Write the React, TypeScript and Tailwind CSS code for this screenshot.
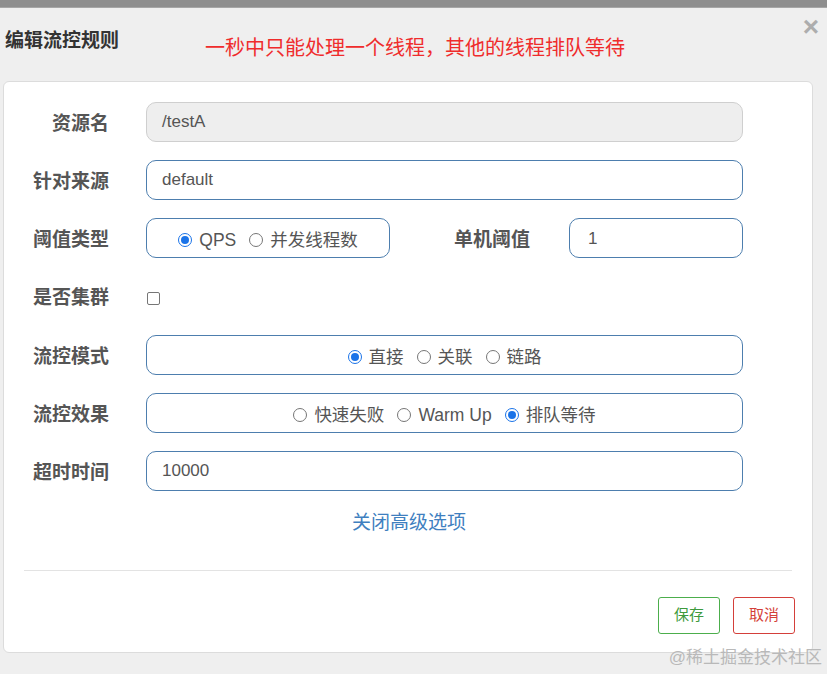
const font = "font-['Microsoft_YaHei','Liberation_Sans','Noto_Sans_CJK_SC',sans-serif]";

function Radio({ checked, label }: { checked?: boolean; label: string }) {
  return (
    <span className="flex items-center gap-[7px]">
      {checked ? (
        <span className="flex h-[14px] w-[14px] items-center justify-center rounded-full border-[1.5px] border-[#1a73e8] bg-white">
          <span className="h-[8px] w-[8px] rounded-full bg-[#1a73e8]" />
        </span>
      ) : (
        <span className="h-[14px] w-[14px] rounded-full border border-[#767676] bg-white" />
      )}
      <span className="text-[17.5px]">{label}</span>
    </span>
  );
}

function Label({ children }: { children: string }) {
  return (
    <div className="mt-[4px] w-[105px] shrink-0 text-right text-[19px] font-bold text-[#555]">{children}</div>
  );
}

const box = "h-[40px] rounded-[10px] border border-[#4d7eae] bg-white text-[17px] text-[#555]";

export default function App() {
  return (
    <div className={`relative h-[674px] w-[827px] overflow-hidden bg-[#efefef] ${font}`}>
      <div className="h-[8px] border-b border-[#a6a6a6] bg-[#8e8e8e]" />

      <div className="relative flex h-[73px] items-center">
        <h4 className="ml-[5px] mt-[-7px] text-[19px] font-bold text-[#333]">编辑流控规则</h4>
        <span className="ml-[86px] mt-[7px] text-[20px] text-[#ef2c2c]">一秒中只能处理一个线程，其他的线程排队等待</span>
        <span className="absolute right-[8px] top-[5px] text-[28px] font-bold leading-none text-[#adadad]">×</span>
      </div>

      <div className="ml-[3px] w-[810px] rounded-[6px] border border-[#dcdcdc] bg-white pt-[20px]">
        <div className="flex flex-col gap-[18.2px]">
          <div className="flex items-center">
            <Label>资源名</Label>
            <div className="ml-[37px] flex h-[40px] w-[597px] items-center rounded-[10px] border border-[#cfcfcf] bg-[#eeeeee] px-[15px] text-[17px] text-[#555]">
              /testA
            </div>
          </div>

          <div className="flex items-center">
            <Label>针对来源</Label>
            <div className={`ml-[37px] flex w-[597px] items-center px-[15px] ${box}`}>default</div>
          </div>

          <div className="flex items-center">
            <Label>阈值类型</Label>
            <div className={`ml-[37px] flex w-[244px] items-center justify-center gap-[13px] pt-[4px] ${box}`}>
              <Radio checked label="QPS" />
              <Radio label="并发线程数" />
            </div>
            <div className="ml-[64px] mt-[4px] w-[80px] text-[19px] font-bold text-[#555]">单机阈值</div>
            <div className={`ml-[35px] flex w-[174px] items-center px-[18px] ${box}`}>1</div>
          </div>

          <div className="flex h-[40px] items-center">
            <Label>是否集群</Label>
            <span className="ml-[38px] mt-[4px] h-[13px] w-[13px] rounded-[2px] border border-[#767676] bg-white" />
          </div>

          <div className="flex items-center">
            <Label>流控模式</Label>
            <div className={`ml-[37px] flex w-[597px] items-center justify-center gap-[13px] pt-[5px] ${box}`}>
              <Radio checked label="直接" />
              <Radio label="关联" />
              <Radio label="链路" />
            </div>
          </div>

          <div className="flex items-center">
            <Label>流控效果</Label>
            <div className={`ml-[37px] flex w-[597px] items-center justify-center gap-[13px] pt-[5px] ${box}`}>
              <Radio label="快速失败" />
              <Radio label="Warm Up" />
              <Radio checked label="排队等待" />
            </div>
          </div>

          <div className="flex items-center">
            <Label>超时时间</Label>
            <div className={`ml-[37px] flex w-[597px] items-center px-[15px] ${box}`}>10000</div>
          </div>
        </div>

        <div className="mt-[20px] text-center text-[19px] leading-[24px] text-[#3f7fbf]">
          <span className="ml-[2px]">关闭高级选项</span>
        </div>

        <div className="mx-[20px] mt-[35px] border-t border-[#e3e3e3]" />

        <div className="flex justify-end gap-[13px] px-[17px] pb-[18px] pt-[26px]">
          <button className="h-[37px] w-[62px] rounded-[3px] border border-[#4cae4c] bg-white text-[15px] text-[#3d9a3d]">
            保存
          </button>
          <button className="h-[37px] w-[62px] rounded-[3px] border border-[#d43f3a] bg-white text-[15px] text-[#d43f3a]">
            取消
          </button>
        </div>
      </div>

      <span className="absolute bottom-[4px] right-[5px] text-[17px] text-[#b9b9b9]">@稀土掘金技术社区</span>
    </div>
  );
}
